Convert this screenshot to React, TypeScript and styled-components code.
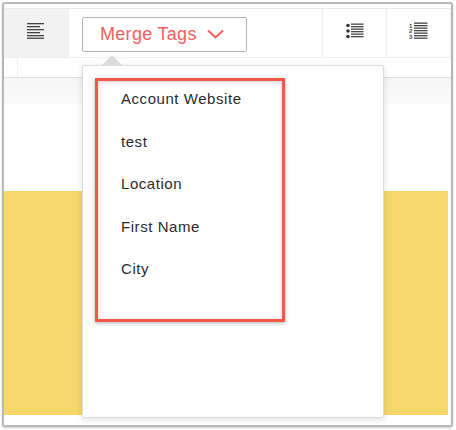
import React from "react";
import styled, { createGlobalStyle } from "styled-components";

const mergeTags = ["Account Website", "test", "Location", "First Name", "City"];

const GlobalStyle = createGlobalStyle`
  html, body {
    margin: 0;
    background: #ffffff;
  }
  body {
    width: 456px;
    height: 430px;
    overflow: hidden;
    font-family: "Liberation Sans", Arial, sans-serif;
  }
`;

const Page = styled.div`
  box-sizing: border-box;
  width: 456px;
  height: 430px;
  padding: 2px 3px 3px 2px;
`;

const Frame = styled.div`
  position: relative;
  box-sizing: border-box;
  height: 100%;
  display: flex;
  flex-direction: column;
  padding-top: 4px;
  border: 2px solid #b9b9b9;
  border-radius: 3px;
  background: #ffffff;
  box-shadow: 0 1px 2px rgba(0, 0, 0, 0.2);
`;

const Toolbar = styled.div`
  box-sizing: border-box;
  display: flex;
  flex: none;
  height: 50px;
  border-top: 1px solid #e8e8e8;
  border-bottom: 1px solid #efefef;
`;

const ToolCell = styled.div<{ $width: number; $shaded?: boolean }>`
  box-sizing: border-box;
  width: ${(p) => p.$width}px;
  display: flex;
  align-items: center;
  justify-content: center;
  padding-bottom: 5px;
  border-right: 1px solid #efefef;
  background: ${(p) => (p.$shaded ? "#f2f2f2" : "#ffffff")};
`;

const MergeCell = styled(ToolCell)`
  justify-content: flex-start;
  padding: 2px 0 0 13px;
`;

const MergeButton = styled.button`
  box-sizing: border-box;
  width: 165px;
  height: 35px;
  display: flex;
  align-items: center;
  gap: 10px;
  padding: 0 0 0 17px;
  border: 1px solid #b4b4b4;
  border-radius: 2px;
  background: #ffffff;
  color: #f4605c;
  font-family: inherit;
  font-size: 18px;
  letter-spacing: 0.3px;
`;

const SubBar = styled.div`
  box-sizing: border-box;
  height: 20px;
  flex: none;
  display: flex;
  border-bottom: 1px solid #dcdcdc;
  box-shadow: 0 1px 2px rgba(0, 0, 0, 0.1);
`;

const SubCell = styled.div`
  width: 13px;
  border-right: 1px solid #efefef;
`;

const Canvas = styled.div`
  flex: 1;
  display: flex;
  flex-direction: column;
  background: linear-gradient(#f6f6f6, #fafafa 26px, #ffffff 27px);
`;

const Banner = styled.div`
  height: 224px;
  margin: 113px 3px 0 0;
  background: #f5d76a;
`;

const Dropdown = styled.div`
  position: absolute;
  left: 78px;
  top: 61px;
  box-sizing: border-box;
  width: 302px;
  height: 353px;
  padding: 12px 0 0 38px;
  border: 1px solid #dddddd;
  border-radius: 2px;
  background: #ffffff;
  box-shadow: 0 2px 6px rgba(0, 0, 0, 0.12);

  &::before {
    content: "";
    position: absolute;
    left: 19px;
    top: -11px;
    border-left: 10px solid transparent;
    border-right: 10px solid transparent;
    border-bottom: 10px solid #dcdcdc;
  }
`;

const TagItem = styled.div`
  height: 42.5px;
  line-height: 42.5px;
  color: #2b2b2b;
  font-size: 15px;
  letter-spacing: 0.55px;
`;

const Callout = styled.div`
  position: absolute;
  left: 91px;
  top: 74px;
  box-sizing: border-box;
  width: 190px;
  height: 244px;
  border: 3px solid #f4584a;
  box-shadow: 0 1px 4px rgba(0, 0, 0, 0.3), inset 0 1px 4px rgba(0, 0, 0, 0.2);
  pointer-events: none;
`;

const AlignIcon = () => (
  <svg width="18" height="16" viewBox="0 0 18 16" fill="#444444">
    <rect y="0" width="17" height="1.3" />
    <rect y="3" width="13" height="1.3" />
    <rect y="6" width="17" height="1.3" />
    <rect y="9" width="13" height="1.3" />
    <rect y="12" width="17" height="1.3" />
    <rect y="14.6" width="17" height="1.3" />
  </svg>
);

const BulletIcon = () => (
  <svg width="18" height="16" viewBox="0 0 18 16" fill="#333333">
    <circle cx="2" cy="2.5" r="1.8" />
    <circle cx="2" cy="8" r="1.8" />
    <circle cx="2" cy="13.5" r="1.8" />
    {[0.5, 3, 5.5, 8, 10.5, 13].map((y) => (
      <rect key={y} x="5" y={y} width="12.5" height="1.3" fill="#444444" />
    ))}
  </svg>
);

const NumberedIcon = () => (
  <svg width="19" height="17" viewBox="0 0 19 17" fill="#444444">
    <text x="0" y="5.5" fontSize="6" fontFamily="Liberation Sans" fontWeight="700">1</text>
    <text x="0" y="11" fontSize="6" fontFamily="Liberation Sans" fontWeight="700">2</text>
    <text x="0" y="16.5" fontSize="6" fontFamily="Liberation Sans" fontWeight="700">3</text>
    {[0.5, 3, 5.5, 8, 10.5, 13, 15.5].map((y) => (
      <rect key={y} x="5" y={y} width="13.5" height="1.3" />
    ))}
  </svg>
);

const Chevron = () => (
  <svg width="17" height="10" viewBox="0 0 17 10" fill="none" stroke="#f4605c" strokeWidth="2">
    <path d="M1 1.5 L8.5 8.5 L16 1.5" />
  </svg>
);

export default function App() {
  return (
    <>
      <GlobalStyle />
      <Page>
        <Frame>
          <Toolbar>
            <ToolCell $width={65} $shaded>
              <AlignIcon />
            </ToolCell>
            <MergeCell $width={254}>
              <MergeButton>
                Merge Tags
                <Chevron />
              </MergeButton>
            </MergeCell>
            <ToolCell $width={64}>
              <BulletIcon />
            </ToolCell>
            <ToolCell $width={64}>
              <NumberedIcon />
            </ToolCell>
          </Toolbar>
          <SubBar>
            <SubCell />
          </SubBar>
          <Canvas>
            <Banner />
          </Canvas>
          <Dropdown>
            {mergeTags.map((tag) => (
              <TagItem key={tag}>{tag}</TagItem>
            ))}
          </Dropdown>
          <Callout />
        </Frame>
      </Page>
    </>
  );
}
